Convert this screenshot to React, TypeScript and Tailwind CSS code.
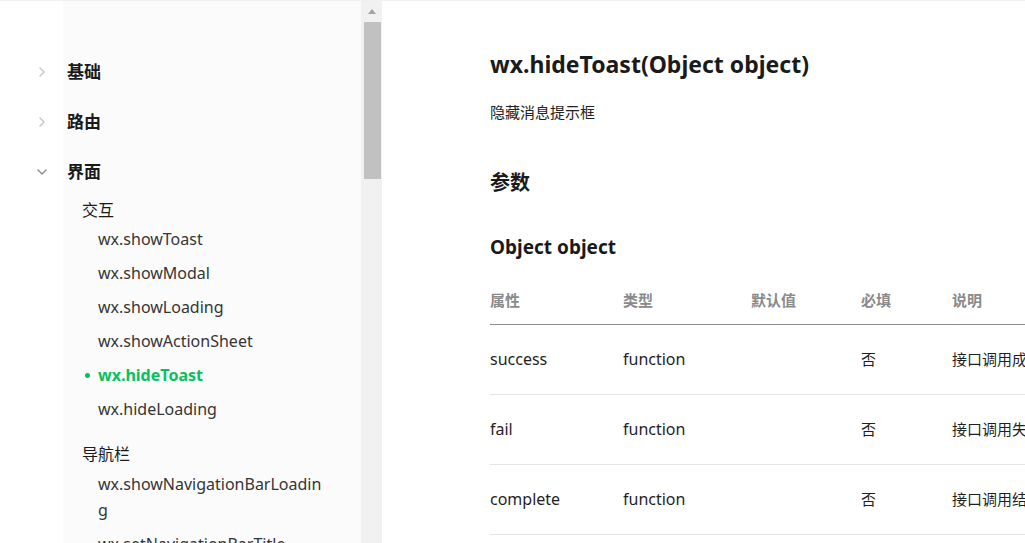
import { ChevronRight, ChevronDown } from 'lucide-react';

const font = 'font-["Noto_Sans","Noto_Sans_CJK_SC",sans-serif]';

const topGroups = [
  { label: '基础', open: false },
  { label: '路由', open: false },
  { label: '界面', open: true },
];

const interaction = [
  'wx.showToast',
  'wx.showModal',
  'wx.showLoading',
  'wx.showActionSheet',
  'wx.hideToast',
  'wx.hideLoading',
];

const navBar = ['wx.showNavigationBarLoading', 'wx.setNavigationBarTitle'];

const rows = [
  { name: 'success', type: 'function', def: '', req: '否', desc: '接口调用成功的回调函数' },
  { name: 'fail', type: 'function', def: '', req: '否', desc: '接口调用失败的回调函数' },
  { name: 'complete', type: 'function', def: '', req: '否', desc: '接口调用结束的回调函数（调用成功、失败都会执行）' },
];

function NavItem({ label, active }: { label: string; active?: boolean }) {
  return (
    <div className="relative w-[230px] py-[4px] pl-[98px] box-content">
      {active && (
        <span className="absolute left-[85px] top-[15px] h-[5px] w-[5px] rounded-full bg-[#07c160]" />
      )}
      <div
        className={`break-all text-[16px] leading-[26px] ${
          active ? 'font-bold text-[#07c160]' : 'text-[#353535]'
        }`}
      >
        {label}
      </div>
    </div>
  );
}

function Sidebar() {
  return (
    <aside className="flex h-[542px] w-[382px] shrink-0 overflow-hidden">
      <div className="w-[361px] bg-[linear-gradient(to_right,#ffffff_63px,#fbfbfb_63px)] pt-[46px]">
        {topGroups.map((g) => (
          <div key={g.label} className="flex h-[50px] items-center">
            <span className="flex w-[67px] pl-[34px]">
              {g.open ? (
                <ChevronDown size={16} strokeWidth={2} className="text-[#8a8a8a]" />
              ) : (
                <ChevronRight size={16} strokeWidth={2} className="text-[#c4c4c4]" />
              )}
            </span>
            <span className="text-[17px] font-bold text-[#1a1a1a]">{g.label}</span>
          </div>
        ))}

        <div className="mt-[1px] pl-[82px] text-[16px] leading-[24px] text-[#1a1a1a]">交互</div>
        {interaction.map((item) => (
          <NavItem key={item} label={item} active={item === 'wx.hideToast'} />
        ))}

        <div className="mt-[16px] pl-[82px] text-[16px] leading-[24px] text-[#1a1a1a]">导航栏</div>
        <div className="pt-[1px]">
          {navBar.map((item) => (
            <NavItem key={item} label={item} />
          ))}
        </div>
      </div>

      {/* scrollbar */}
      <div className="flex w-[21px] flex-col items-center bg-[#f1f1f1]">
        <div className="flex h-[21px] w-full items-center justify-center">
          <div className="h-0 w-0 border-x-[4px] border-b-[5px] border-x-transparent border-b-[#a3a3a3]" />
        </div>
        <div className="ml-[1px] h-[157px] w-[17px] bg-[#c1c1c1]" />
      </div>
    </aside>
  );
}

export default function App() {
  return (
    <div className={`${font} h-[543px] w-[1025px] overflow-hidden border-t border-[#f0f0f0] bg-white`}>
      <div className="flex">
        <Sidebar />

        <main className="min-w-0 flex-1 overflow-hidden pl-[108px] pt-[47px] text-[#1a1a1a]">
          <h1 className="text-[23px] font-bold leading-[32px]">wx.hideToast(Object object)</h1>
          <p className="mt-[20px] text-[15px] leading-[24px] text-[#222]">隐藏消息提示框</p>

          <h2 className="mt-[45px] text-[20px] font-bold leading-[28px]">参数</h2>
          <h3 className="mt-[37px] text-[19px] font-bold leading-[26px]">Object object</h3>

          <table className="mt-[16px] w-[760px] table-fixed border-collapse text-left">
            <thead>
              <tr className="h-[48px] border-b border-[#8c8c8c] text-[15px] font-bold text-[#8a8a8a]">
                <th className="w-[133px] font-bold">属性</th>
                <th className="w-[128px] font-bold">类型</th>
                <th className="w-[110px] font-bold">默认值</th>
                <th className="w-[91px] font-bold">必填</th>
                <th className="font-bold">说明</th>
              </tr>
            </thead>
            <tbody>
              {rows.map((r) => (
                <tr key={r.name} className="h-[70px] border-b border-[#e5e5e5] text-[16px] text-[#1f1f1f]">
                  <td>{r.name}</td>
                  <td>{r.type}</td>
                  <td>{r.def}</td>
                  <td className="text-[15px]">{r.req}</td>
                  <td className="whitespace-nowrap text-[15px]">{r.desc}</td>
                </tr>
              ))}
            </tbody>
          </table>
        </main>
      </div>
    </div>
  );
}
